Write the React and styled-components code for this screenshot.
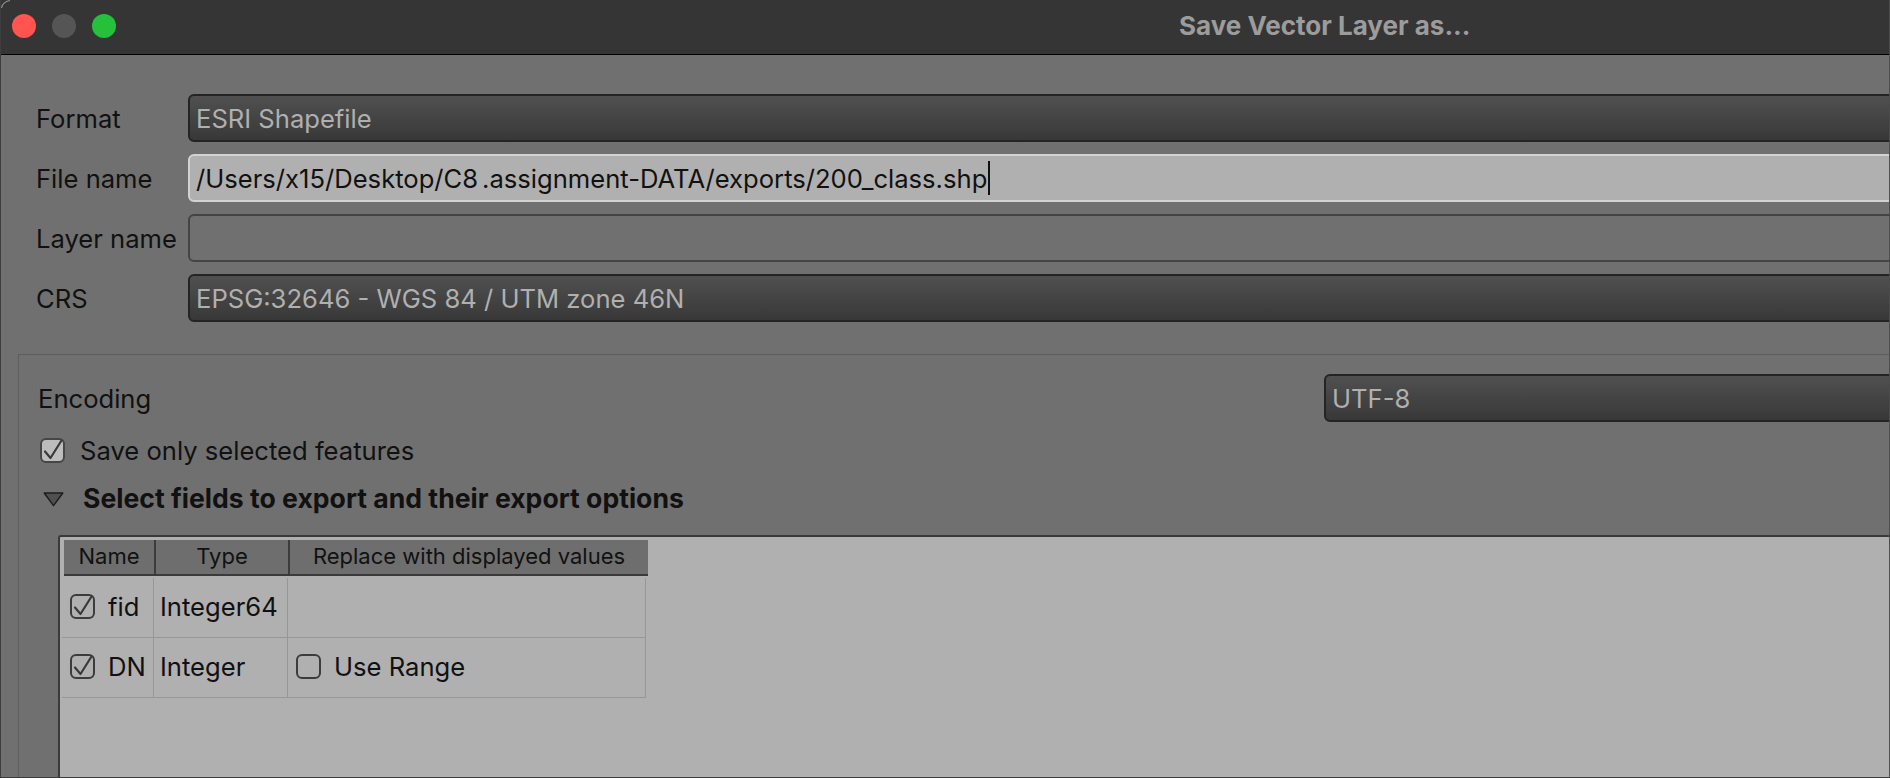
import React from "react";
import styled, { createGlobalStyle } from "styled-components";

const GlobalStyle = createGlobalStyle`
  html, body {
    margin: 0;
    padding: 0;
    background: #707070;
    overflow: hidden;
  }
`;

const Window = styled.div`
  box-sizing: border-box;
  position: relative;
  width: 1890px;
  height: 778px;
  display: flex;
  flex-direction: column;
  overflow: hidden;
  background: #707070;
  border-left: 1px solid #3e3e3e;
  border-right: 1px solid #4c4c4c;
  border-bottom: 1px solid #3a3a3a;
  font-family: Inter, "Noto Sans", sans-serif;
  font-size: 25.6px;
  color: #111;
`;

const Corner = styled.svg`
  position: absolute;
  top: 0;
  left: 0;
`;

const TitleBar = styled.div`
  flex: none;
  height: 54px;
  display: flex;
  align-items: center;
  background: #353535;
  border-bottom: 1px solid #000;
  padding-left: 11px;
`;

const Light = styled.span`
  flex: none;
  width: 24px;
  height: 24px;
  border-radius: 50%;
  margin: 0 16px 2px 0;
  background: ${(p) => p.$color};
`;

const Title = styled.div`
  margin: 0 0 4px 1047px;
  font-size: 26px;
  font-weight: 700;
  color: #9c9c9c;
  white-space: nowrap;
`;

const Form = styled.div`
  padding: 39px 0 0 35px;
  display: flex;
  flex-direction: column;
  gap: 12px;
`;

const Row = styled.div`
  display: flex;
  align-items: center;
  height: 48px;
`;

const Label = styled.div`
  flex: none;
  width: 152px;
`;

const Combo = styled.div`
  box-sizing: border-box;
  flex: 1;
  height: 48px;
  margin-right: -12px;
  padding-left: 6px;
  display: flex;
  align-items: center;
  border: 2px solid #242424;
  border-radius: 6px;
  background: linear-gradient(#505050, #383838);
  color: #b0b0b0;
`;

const TextInput = styled.div`
  box-sizing: border-box;
  flex: 1;
  height: 48px;
  margin-right: -12px;
  padding-left: 6px;
  display: flex;
  align-items: center;
  border: 2px solid ${(p) => (p.$focused ? "#d2d2d2" : "#444")};
  border-radius: 6px;
  background: ${(p) => (p.$focused ? "#b0b0b0" : "transparent")};
  color: #111;
`;

const PathText = styled.span`
  white-space: pre;
`;

const Kern = styled.span`
  margin-right: 4px;
`;

const Caret = styled.span`
  width: 2px;
  height: 34px;
  margin-left: 1px;
  background: #111;
`;

const Group = styled.div`
  flex: 1;
  min-height: 0;
  margin: 32px 0 0 17px;
  padding: 19px 0 0 19px;
  display: flex;
  flex-direction: column;
  border-top: 1px solid #5e5e5e;
  border-left: 1px solid #5e5e5e;
`;

const EncodingRow = styled.div`
  display: flex;
  align-items: center;
  height: 48px;
`;

const EncodingLabel = styled.div`
  flex: none;
  width: 1286px;
`;

const CheckRow = styled.div`
  display: flex;
  align-items: center;
  margin: 16px 0 0 2px;
  height: 25px;
  gap: 15px;
`;

const SectionRow = styled.div`
  box-sizing: border-box;
  display: flex;
  align-items: center;
  margin: 17px 0 0 5px;
  height: 38px;
  padding-bottom: 2px;
  gap: 19px;
  font-size: 26.6px;
  font-weight: 700;
`;

const TriangleIcon = styled.svg`
  margin-top: 2px;
`;

const Panel = styled.div`
  flex: 1;
  min-height: 0;
  margin: 17px 0 0 20px;
  padding: 3px 0 0 4px;
  background: #b0b0b0;
  border-top: 2px solid #3a3a3a;
  border-left: 2px solid #3a3a3a;
  border-top-left-radius: 3px;
`;

const TableHead = styled.div`
  box-sizing: border-box;
  display: grid;
  grid-template-columns: 92px 134px 358px;
  width: 584px;
  height: 36px;
  background: #6e6e6e;
  border-bottom: 2px solid #3a3a3a;
`;

const HeadCell = styled.div`
  display: flex;
  align-items: center;
  justify-content: center;
  padding-bottom: 3px;
  font-size: 22px;
  border-right: ${(p) => (p.$last ? "none" : "2px solid #3c3c3c")};
`;

const TableBody = styled.div`
  margin: 2px 0 0 -2px;
  width: 584px;
`;

const TableRow = styled.div`
  box-sizing: border-box;
  display: grid;
  grid-template-columns: 92px 134px 358px;
  height: 60px;
  border-bottom: 1px solid #979797;
`;

const Cell = styled.div`
  box-sizing: border-box;
  display: flex;
  align-items: center;
  gap: ${(p) => p.$gap || 0}px;
  padding: 0 0 2px ${(p) => p.$pad || 0}px;
  border-right: 1px solid #979797;
`;

const Box = styled.span`
  box-sizing: border-box;
  position: relative;
  flex: none;
  width: 25px;
  height: 25px;
  border: 2px solid ${(p) => (p.$light ? "#464646" : "#3c3c3c")};
  border-radius: 6px;
  background: ${(p) => (p.$light ? "#bdbdbd" : "transparent")};
`;

const CheckMark = styled.svg`
  position: absolute;
  top: -2px;
  left: -2px;
  overflow: visible;
`;

const Triangle = () => (
  <TriangleIcon width="21" height="15" viewBox="0 0 21 15">
    <path d="M1.2 1 H19.8 L10.5 13.6 Z" fill="#505050" stroke="#1c1c1c" strokeWidth="1.4" strokeLinejoin="round" />
  </TriangleIcon>
);

const Checkbox = ({ checked, light }) => (
  <Box $light={light}>
    {checked && (
      <CheckMark width="25" height="25" viewBox="0 0 25 25">
        <path d="M5 13.5 L10.5 20 L21.5 2.5" fill="none" stroke="#3a3a3a" strokeWidth="2.2" strokeLinecap="round" strokeLinejoin="round" />
      </CheckMark>
    )}
  </Box>
);

export default function App() {
  return (
    <>
      <GlobalStyle />
      <Window>
        <Corner width="12" height="12" viewBox="0 0 12 12">
          <path d="M0.5 8 Q1.5 2 9 0.5" fill="none" stroke="#8a8a8a" strokeWidth="1.2" />
        </Corner>
        <TitleBar>
          <Light $color="#ff5450" />
          <Light $color="#555555" />
          <Light $color="#26c13b" />
          <Title>Save Vector Layer as...</Title>
        </TitleBar>
        <Form>
          <Row>
            <Label>Format</Label>
            <Combo>ESRI Shapefile</Combo>
          </Row>
          <Row>
            <Label>File name</Label>
            <TextInput $focused>
              <PathText>
                /Users/x15/Desktop/<Kern>C8</Kern>.assignment-DATA/exports/200_class.shp
              </PathText>
              <Caret />
            </TextInput>
          </Row>
          <Row>
            <Label>Layer name</Label>
            <TextInput />
          </Row>
          <Row>
            <Label>CRS</Label>
            <Combo>EPSG:32646 - WGS 84 / UTM zone 46N</Combo>
          </Row>
        </Form>
        <Group>
          <EncodingRow>
            <EncodingLabel>Encoding</EncodingLabel>
            <Combo>UTF-8</Combo>
          </EncodingRow>
          <CheckRow>
            <Checkbox checked light />
            Save only selected features
          </CheckRow>
          <SectionRow>
            <Triangle />
            Select fields to export and their export options
          </SectionRow>
          <Panel>
            <TableHead>
              <HeadCell>Name</HeadCell>
              <HeadCell>Type</HeadCell>
              <HeadCell $last>Replace with displayed values</HeadCell>
            </TableHead>
            <TableBody>
              <TableRow>
                <Cell $pad={8} $gap={13}>
                  <Checkbox checked />
                  fid
                </Cell>
                <Cell $pad={6}>Integer64</Cell>
                <Cell />
              </TableRow>
              <TableRow>
                <Cell $pad={8} $gap={13}>
                  <Checkbox checked />
                  DN
                </Cell>
                <Cell $pad={6}>Integer</Cell>
                <Cell $pad={8} $gap={13}>
                  <Checkbox />
                  Use Range
                </Cell>
              </TableRow>
            </TableBody>
          </Panel>
        </Group>
      </Window>
    </>
  );
}
